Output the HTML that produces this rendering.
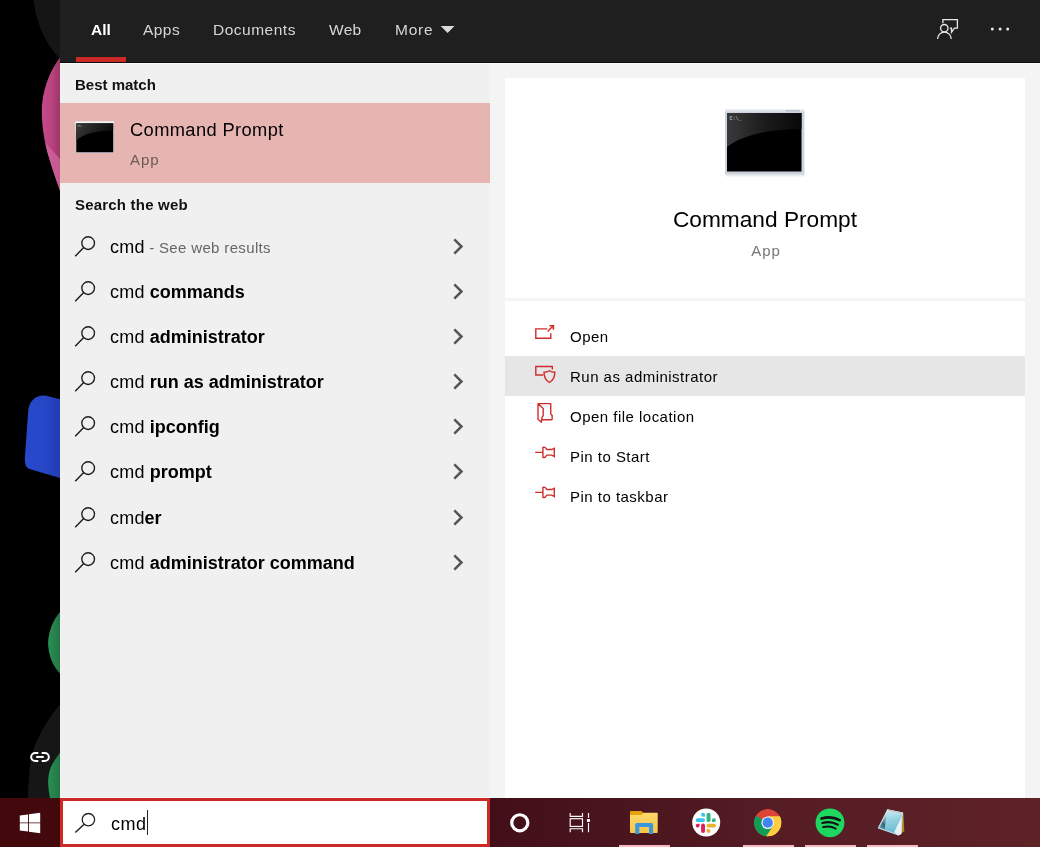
<!DOCTYPE html>
<html>
<head>
<meta charset="utf-8">
<title>Search</title>
<style>
*{box-sizing:border-box;margin:0;padding:0}
html,body{width:1040px;height:847px;overflow:hidden;background:#000;font-family:"Liberation Sans",sans-serif;}
#root{position:absolute;left:0;top:0;width:1040px;height:847px;overflow:hidden;background:#000}
.tab,.hdr,.txt,.t,#bm_t,#bm_s,#c_t,#c_s,#s_t{will-change:transform}
.abs{position:absolute}
/* wallpaper strip */
#wall{position:absolute;left:0;top:0;width:60px;height:798px;background:#000;overflow:hidden}
/* top bar */
#topbar{position:absolute;left:60px;top:0;width:980px;height:64px;background:#1f1f1f;border-bottom:1px solid #fafafa;z-index:2}
#topbar:after{content:"";position:absolute;left:0;top:62px;width:980px;height:1px;background:#0c0c0c}
.tab{position:absolute;top:1px;height:57px;line-height:58px;font-size:15.5px;color:#d6d6d6;white-space:nowrap}
.tab.sel{color:#fff;font-weight:bold}
#underline{position:absolute;left:16px;top:57px;width:50px;height:5px;background:#cb2a27}
/* left col */
#left{position:absolute;left:60px;top:63px;width:430px;height:735px;background:#f0f0f0}
.hdr{position:absolute;left:15px;font-size:15px;font-weight:bold;color:#111;white-space:nowrap}
#best{position:absolute;left:0;top:40px;width:430px;height:80px;background:#e6b4b1}
.row{position:absolute;left:0;width:430px;height:45px}
.row .txt{position:absolute;left:50px;top:1px;line-height:45px;font-size:18px;color:#000;white-space:nowrap;letter-spacing:0.200px}
.row .txt b{font-weight:bold;color:#000;letter-spacing:0}
.row .txt .sub{font-size:15px;color:#666;letter-spacing:0.350px}
.row svg.mag{position:absolute;left:0;top:0;overflow:visible}
.row svg.chev{position:absolute;left:390px;top:0}
/* right */
#right{position:absolute;left:490px;top:63px;width:550px;height:735px;background:#f4f4f4}
#card1{position:absolute;left:15px;top:15px;width:520px;height:220px;background:#fff}
#card2{position:absolute;left:15px;top:238px;width:520px;height:497px;background:#fff}
#sep{position:absolute;left:15px;top:235px;width:520px;height:3px;background:#f3f3f3}
#sep i{position:absolute;left:0;top:1px;width:517px;height:1px;background:#f8f8f8}
.act{position:absolute;left:0;width:520px;height:40px}
.act.hov{background:#e6e6e6}
.act .t{position:absolute;left:65px;top:1px;line-height:40px;font-size:15px;letter-spacing:0.480px;color:#000;white-space:nowrap}
.act .ic{position:absolute;left:23px;top:0}
.act .ic svg{display:block;overflow:visible}
/* taskbar */
#taskbar{position:absolute;left:0;top:798px;width:1040px;height:49px;background:linear-gradient(90deg,#43080b 0%,#43080b 6%,#420e17 47%,#47131c 56%,#561d25 76%,#5e2227 100%)}
#search{position:absolute;left:60px;top:0;width:430px;height:49px;background:#fff;border:3px solid #cb2a27}
</style>
</head>
<body>
<div id="root">

<div id="wall">
<svg width="60" height="798" viewBox="0 0 60 798">
  <defs>
    <linearGradient id="pk" x1="0" y1="0" x2="1" y2="0">
      <stop offset="0" stop-color="#c64a8c"/><stop offset="0.550" stop-color="#b9437f"/><stop offset="1" stop-color="#9c3769"/>
    </linearGradient>
    <linearGradient id="bl" x1="0" y1="0" x2="1" y2="0">
      <stop offset="0" stop-color="#2749cc"/><stop offset="0.600" stop-color="#2646c6"/><stop offset="1" stop-color="#213cb0"/>
    </linearGradient>
    <linearGradient id="gr" x1="0" y1="0" x2="1" y2="0">
      <stop offset="0" stop-color="#2a9054"/><stop offset="1" stop-color="#237645"/>
    </linearGradient>
    <clipPath id="pkc"><path d="M60 57.500 C52 68 44 84 42 105 C41 122 44 142 50 161 C53 171 57 182 60 191 Z"/></clipPath>
  </defs>
  <path d="M33.600 0 C35 14 39 26 44 36 C49 46 54 53 60 58.500 L60 0 Z" fill="#151515"/>
  <path d="M60 57.500 C52 68 44 84 42 105 C41 122 44 142 50 161 C53 171 57 182 60 191 Z" fill="url(#pk)"/>
  <path d="M38 135 L60 159 L60 195 L38 195 Z" fill="#d26aa0" opacity="0.700" clip-path="url(#pkc)"/>
  <path d="M60 399.200 L47 395.900 C36 394 29 401 28.200 411.200 L24.900 457 C24.500 464 26 467.700 29.500 469 L60 478 Z" fill="url(#bl)"/>
  <path d="M60 612 C53 620 48.500 631 48.100 642.500 C48 654 52 665 60 673.500 Z" fill="url(#gr)"/>
  <path d="M60 704.500 C53 713 48 720 44.700 725.800 C40 734 37 740 34.300 746.700 C31 756 29.500 766 29.100 775.300 C28.500 783 28 790 27.800 798 L60 798 Z" fill="#161616"/>
  <path d="M60 752.800 C56 758 53 762.500 50.700 767.500 C48.800 772.500 48 778 48.100 783.100 C48.300 788 49 793 50 798 L60 798 Z" fill="url(#gr)"/>
  <g fill="none" stroke="#fff" stroke-width="2">
    <path d="M38.300 752.900 H35.200 A4.050 4.050 0 0 0 35.200 761 H38.300"/>
    <path d="M41.700 752.900 H44.800 A4.050 4.050 0 0 1 44.800 761 H41.700"/>
    <path d="M36.200 756.950 H43.800"/>
  </g>
</svg>
</div>

<div id="topbar">
  <div class="tab sel" style="left:31px">All</div>
  <div class="tab" style="left:83px;letter-spacing:0.450px">Apps</div>
  <div class="tab" style="left:153px;letter-spacing:0.500px">Documents</div>
  <div class="tab" style="left:269px;letter-spacing:0.300px">Web</div>
  <div class="tab" style="left:335px;letter-spacing:0.750px">More</div>
  <svg class="abs" style="left:380px;top:25px" width="16" height="10" viewBox="0 0 16 10"><path d="M0.700 1 L14.500 1 L7.600 8 Z" fill="#dadada"/></svg>
  <div id="underline"></div>
  <svg class="abs" id="topicons" style="left:0;top:0" width="980" height="63" viewBox="60 0 980 63">
    <g fill="none" stroke="#e8e8e8" stroke-width="1.300">
      <circle cx="944.300" cy="28.200" r="3.700"/>
      <path d="M937.600 38.900 A6.800 6.800 0 0 1 951.200 38.900"/>
      <path d="M942.900 23.200 V19.700 H957.400 V28.200 H954.500 L951.500 32.200 V28.200 H949.800"/>
    </g>
    <g fill="#e8e8e8"><circle cx="992.300" cy="29.100" r="1.500"/><circle cx="1000.100" cy="29.100" r="1.500"/><circle cx="1007.700" cy="29.100" r="1.500"/></g>
  </svg>

</div>

<div id="left">
  <div class="abs" style="left:0;top:734px;width:430px;height:1px;background:#f9fcfc"></div>
  <div class="hdr" style="top:13px">Best match</div>
  <div id="best">
    <svg class="abs" style="left:15px;top:18px" width="39.500" height="32.500" viewBox="0 0 40 33" preserveAspectRatio="none">
      <defs><linearGradient id="g1" x1="0" y1="0" x2="1" y2="0.3"><stop offset="0" stop-color="#3c3c3c"/><stop offset="1" stop-color="#0a0a0a"/></linearGradient></defs>
      <rect x="0.500" y="0.500" width="39" height="32" fill="#c3c8d2"/>
      <rect x="0.500" y="0.500" width="39" height="11" fill="#e4e7ec"/>
      <rect x="0.500" y="0.500" width="39" height="2.300" fill="#f2f4f7"/>
      <rect x="1.300" y="2.400" width="37.400" height="29.300" fill="#000"/>
      <path d="M1.300 2.400 H38.700 V10 C22 10 8 13 1.300 20 Z" fill="url(#g1)"/>
      <rect x="2.400" y="4.300" width="3.400" height="1.200" fill="#bbb" opacity="0.550"/>
      <rect x="5.900" y="5.300" width="1.500" height="0.600" fill="#bbb" opacity="0.450"/>
    </svg>
    <div class="abs" id="bm_t" style="left:70px;top:16px;font-size:18.300px;letter-spacing:0.380px;color:#000;white-space:nowrap;line-height:22px">Command Prompt</div>
    <div class="abs" id="bm_s" style="left:70px;top:48px;font-size:15px;letter-spacing:0.900px;color:#6e5858;white-space:nowrap;line-height:18px">App</div>
  </div>
  <div class="hdr" style="top:133px;letter-spacing:0.200px">Search the web</div>
  <div class="row" style="top:160.70px"><svg class="mag" width="30" height="45" viewBox="0 0 30 45"><circle cx="28.150" cy="19.100" r="6.350" fill="none" stroke="#1c1c1c" stroke-width="1.350"/><path d="M23.700 23.600 L15.200 32.200" stroke="#1c1c1c" stroke-width="1.450" fill="none"/></svg><div class="txt" id="r0">cmd<span class="sub"> - See web results</span></div><svg class="chev" width="14" height="45" viewBox="0 0 14 45"><path d="M4.300 15.300 L11.500 22.500 L4.300 29.700" fill="none" stroke="#555" stroke-width="2.500"/></svg></div>
  <div class="row" style="top:205.85px"><svg class="mag" width="30" height="45" viewBox="0 0 30 45"><circle cx="28.150" cy="19.100" r="6.350" fill="none" stroke="#1c1c1c" stroke-width="1.350"/><path d="M23.700 23.600 L15.200 32.200" stroke="#1c1c1c" stroke-width="1.450" fill="none"/></svg><div class="txt" id="r1">cmd <b>commands</b></div><svg class="chev" width="14" height="45" viewBox="0 0 14 45"><path d="M4.300 15.300 L11.500 22.500 L4.300 29.700" fill="none" stroke="#555" stroke-width="2.500"/></svg></div>
  <div class="row" style="top:251.00px"><svg class="mag" width="30" height="45" viewBox="0 0 30 45"><circle cx="28.150" cy="19.100" r="6.350" fill="none" stroke="#1c1c1c" stroke-width="1.350"/><path d="M23.700 23.600 L15.200 32.200" stroke="#1c1c1c" stroke-width="1.450" fill="none"/></svg><div class="txt" id="r2">cmd <b>administrator</b></div><svg class="chev" width="14" height="45" viewBox="0 0 14 45"><path d="M4.300 15.300 L11.500 22.500 L4.300 29.700" fill="none" stroke="#555" stroke-width="2.500"/></svg></div>
  <div class="row" style="top:296.15px"><svg class="mag" width="30" height="45" viewBox="0 0 30 45"><circle cx="28.150" cy="19.100" r="6.350" fill="none" stroke="#1c1c1c" stroke-width="1.350"/><path d="M23.700 23.600 L15.200 32.200" stroke="#1c1c1c" stroke-width="1.450" fill="none"/></svg><div class="txt" id="r3">cmd <b>run as administrator</b></div><svg class="chev" width="14" height="45" viewBox="0 0 14 45"><path d="M4.300 15.300 L11.500 22.500 L4.300 29.700" fill="none" stroke="#555" stroke-width="2.500"/></svg></div>
  <div class="row" style="top:341.30px"><svg class="mag" width="30" height="45" viewBox="0 0 30 45"><circle cx="28.150" cy="19.100" r="6.350" fill="none" stroke="#1c1c1c" stroke-width="1.350"/><path d="M23.700 23.600 L15.200 32.200" stroke="#1c1c1c" stroke-width="1.450" fill="none"/></svg><div class="txt" id="r4">cmd <b>ipconfig</b></div><svg class="chev" width="14" height="45" viewBox="0 0 14 45"><path d="M4.300 15.300 L11.500 22.500 L4.300 29.700" fill="none" stroke="#555" stroke-width="2.500"/></svg></div>
  <div class="row" style="top:386.45px"><svg class="mag" width="30" height="45" viewBox="0 0 30 45"><circle cx="28.150" cy="19.100" r="6.350" fill="none" stroke="#1c1c1c" stroke-width="1.350"/><path d="M23.700 23.600 L15.200 32.200" stroke="#1c1c1c" stroke-width="1.450" fill="none"/></svg><div class="txt" id="r5">cmd <b>prompt</b></div><svg class="chev" width="14" height="45" viewBox="0 0 14 45"><path d="M4.300 15.300 L11.500 22.500 L4.300 29.700" fill="none" stroke="#555" stroke-width="2.500"/></svg></div>
  <div class="row" style="top:431.60px"><svg class="mag" width="30" height="45" viewBox="0 0 30 45"><circle cx="28.150" cy="19.100" r="6.350" fill="none" stroke="#1c1c1c" stroke-width="1.350"/><path d="M23.700 23.600 L15.200 32.200" stroke="#1c1c1c" stroke-width="1.450" fill="none"/></svg><div class="txt" id="r6">cmd<b>er</b></div><svg class="chev" width="14" height="45" viewBox="0 0 14 45"><path d="M4.300 15.300 L11.500 22.500 L4.300 29.700" fill="none" stroke="#555" stroke-width="2.500"/></svg></div>
  <div class="row" style="top:476.75px"><svg class="mag" width="30" height="45" viewBox="0 0 30 45"><circle cx="28.150" cy="19.100" r="6.350" fill="none" stroke="#1c1c1c" stroke-width="1.350"/><path d="M23.700 23.600 L15.200 32.200" stroke="#1c1c1c" stroke-width="1.450" fill="none"/></svg><div class="txt" id="r7">cmd <b>administrator command</b></div><svg class="chev" width="14" height="45" viewBox="0 0 14 45"><path d="M4.300 15.300 L11.500 22.500 L4.300 29.700" fill="none" stroke="#555" stroke-width="2.500"/></svg></div>
</div>

<div id="right">
  <div id="card1">
    <svg class="abs" style="left:219px;top:30px" width="82" height="70" viewBox="0 0 82 70">
      <defs>
        <linearGradient id="g2" x1="0" y1="0" x2="1" y2="0"><stop offset="0" stop-color="#3a3a3a"/><stop offset="0.5" stop-color="#1c1c1c"/><stop offset="1" stop-color="#080808"/></linearGradient>
        <linearGradient id="g3" x1="0" y1="0" x2="0" y2="1"><stop offset="0" stop-color="#f2f4f7"/><stop offset="1" stop-color="#c9d0da"/></linearGradient>
      </defs>
      <rect x="2" y="2.5" width="79" height="66" fill="#e3e5e8" opacity="0.7"/>
      <rect x="1" y="1" width="79" height="65.500" fill="#cdd3dc"/>
      <rect x="1" y="1" width="79" height="4" fill="url(#g3)"/>
      <rect x="3" y="5" width="74.500" height="58.500" fill="#000"/>
      <path d="M3 5 H77.500 V21 C45 21 18 27 3 39 Z" fill="url(#g2)"/>
      <text x="5.500" y="12" font-family="Liberation Mono, monospace" font-size="5" font-weight="bold" fill="#bbb">C:\_</text>
      <rect x="62" y="2" width="14" height="1.500" fill="#b4bcc8" opacity="0.8"/>
    </svg>
    <div class="abs" id="c_t" style="left:0;top:126px;width:520px;text-align:center;font-size:22.700px;color:#000;line-height:30px;white-space:nowrap">Command Prompt</div>
    <div class="abs" id="c_s" style="left:1px;top:163px;width:520px;text-align:center;font-size:15px;letter-spacing:0.900px;color:#767676;line-height:20px">App</div>
  </div>
  <div id="sep"><i></i></div>
  <div id="card2">

    <div class="act" style="top:15px"><div class="t" id="a0">Open</div></div>
    <div class="act hov" style="top:55px"><div class="t" id="a1">Run as administrator</div></div>
    <div class="act" style="top:95px"><div class="t" id="a2">Open file location</div></div>
    <div class="act" style="top:135px"><div class="t" id="a3">Pin to Start</div></div>
    <div class="act" style="top:175px"><div class="t" id="a4">Pin to taskbar</div></div>
    <svg class="abs" id="acticons" style="left:0;top:0" width="520" height="497" viewBox="505 301 520 497" fill="none" stroke="#cf2d2b" stroke-width="1.400">
      <!-- open -->
      <path d="M547.300 328.900 H535.800 V338.300 H550.800 V333.300"/>
      <path d="M547.600 331.600 L553.300 325.800"/>
      <path d="M549.400 325.700 H553.400 V329.700" stroke-width="1.600"/>
      <!-- run as admin -->
      <path d="M543.200 375 H535.800 V366.500 H552.300 V369.600"/>
      <path d="M549.400 370.700 C550.900 371.800 552.800 372.300 554.800 372.300 C554.800 377 553.400 380.300 549.400 382.500 C545.400 380.300 544 377 544 372.300 C546 372.300 547.900 371.800 549.400 370.700 Z"/>
      <!-- open file location -->
      <path stroke-linejoin="round" d="M538 403.600 H550.750 V414.100 L552.150 415.550 V419 Q552.150 419.750 551.400 419.750 H541.900 M538 403.600 V419.300 L541.350 422.300 L541.900 417.700 L543.200 415.700 V408.450 L538.300 404"/>
      <!-- pin to start -->
      <path d="M535.200 452.350 H542.500 M542.900 446.700 V457.700 M542.900 447.150 C544.200 447.150 545.100 447.200 545.400 447.600 L546.800 449.550 H551.800 L554.300 448.300 V456.500 L551.800 455.150 H546.800 L545.200 457.100 C544.700 457.500 544 457.450 542.900 457.450"/>
      <path transform="translate(0 40)" d="M535.200 452.350 H542.500 M542.900 446.700 V457.700 M542.900 447.150 C544.200 447.150 545.100 447.200 545.400 447.600 L546.800 449.550 H551.800 L554.300 448.300 V456.500 L551.800 455.150 H546.800 L545.200 457.100 C544.700 457.500 544 457.450 542.900 457.450"/>
    </svg>
  </div>
</div>

<div id="taskbar">
  <div id="search"><svg class="abs" style="left:-3px;top:-3px" width="60" height="49" viewBox="60 798 60 49"><circle cx="88.400" cy="819.700" r="6.200" fill="none" stroke="#222" stroke-width="1.300"/><path d="M84.100 824.200 L75.300 832.600" stroke="#222" stroke-width="1.400" fill="none"/></svg>
    <div class="abs" id="s_t" style="left:47.500px;top:2px;height:43px;line-height:43px;font-size:18px;letter-spacing:0.550px;color:#000;white-space:nowrap">cmd</div>
    <div class="abs" id="caret" style="left:83.500px;top:9px;width:1px;height:25px;background:#222"></div></div>
  <svg class="abs" id="tbicons" style="left:0;top:0" width="1040" height="49" viewBox="0 798 1040 49">
    <defs>
      <linearGradient id="np1" x1="0.300" y1="0" x2="0.500" y2="1"><stop offset="0" stop-color="#cbeaf2"/><stop offset="0.450" stop-color="#8fd0e0"/><stop offset="1" stop-color="#66b8d0"/></linearGradient>
      <linearGradient id="np2" x1="0.700" y1="0" x2="0.200" y2="1"><stop offset="0" stop-color="#7f98a3" stop-opacity="0.300"/><stop offset="0.600" stop-color="#3e5f6e"/><stop offset="1" stop-color="#4f9fba"/></linearGradient>
      <linearGradient id="fo1" x1="0" y1="0" x2="0" y2="1"><stop offset="0" stop-color="#ffd86a"/><stop offset="1" stop-color="#f7c64a"/></linearGradient>
      <clipPath id="chc"><circle cx="767.700" cy="822.700" r="13.800"/></clipPath>
    </defs>
    <!-- windows logo -->
    <path d="M19.800 815.600 L28 814.450 V822.450 H19.800 Z M28.900 814.300 L40.200 812.700 V822.450 H28.900 Z M19.800 823.350 H28 V831.600 L19.800 830.450 Z M28.900 823.350 H40.200 V833.300 L28.900 831.750 Z" fill="#fff"/>
    <!-- cortana -->
    <circle cx="519.800" cy="822.800" r="8.050" fill="none" stroke="#fff" stroke-width="3.200"/>
    <!-- task view -->
    <g fill="none" stroke="#fff" stroke-width="1.150">
      <path d="M570.200 812.900 V816.400 H582.500 V812.900"/>
      <rect x="570.200" y="818.700" width="12.300" height="7.700"/>
      <path d="M570.200 832.200 V828.700 H582.500 V832.200"/>
      <path d="M588.500 812.900 V817.700 M588.500 823.100 V832.200"/>
    </g>
    <rect x="586.900" y="819.100" width="3.100" height="2.800" fill="#fff"/>
    <!-- explorer -->
    <rect x="630" y="812.700" width="27.700" height="20.300" rx="0.900" fill="url(#fo1)"/>
    <path d="M630 812 Q630 811 631 811 H641.200 L643.400 812.900 L641.400 814.900 H630 Z" fill="#e5a20f"/>
    <path d="M635.200 834 V824.500 Q635.200 823 636.700 823 H651.600 Q653.100 823 653.100 824.500 V834 H649 V827 H639.300 V834 Z" fill="#3a96dd"/>
    <!-- slack -->
    <circle cx="706.200" cy="822.500" r="14" fill="#fff"/>
    <g>
      <rect x="695.70" y="818.15" width="9.35" height="3.90" rx="1.95" fill="#36c5f0"/>
      <path d="M705.00 816.65 H703.05 A1.95 1.95 0 1 1 705.00 814.70 Z" fill="#36c5f0"/>
      <rect x="706.60" y="812.75" width="3.90" height="9.35" rx="1.95" fill="#2eb67d"/>
      <path d="M712.00 822.05 V820.10 A1.95 1.95 0 1 1 713.95 822.05 Z" fill="#2eb67d"/>
      <rect x="706.55" y="823.65" width="9.35" height="3.90" rx="1.95" fill="#ecb22e"/>
      <path d="M706.60 829.05 H708.55 A1.95 1.95 0 1 1 706.60 831.00 Z" fill="#ecb22e"/>
      <rect x="701.10" y="823.60" width="3.90" height="9.35" rx="1.95" fill="#e01e5a"/>
      <path d="M699.60 823.65 V825.60 A1.95 1.95 0 1 1 697.65 823.65 Z" fill="#e01e5a"/>
      </g>
    <!-- chrome -->
    <g clip-path="url(#chc)">
      <circle cx="767.700" cy="822.700" r="13.800" fill="#db4437"/>
      <path d="M767.700 822.700 L755.750 815.800 A13.800 13.800 0 0 0 767.700 836.500 L773.600 826.100 Z" fill="#0f9d58"/>
      <path d="M755.750 815.800 L761.800 826.100 L767.700 822.700 Z" fill="#0f9d58"/>
      <path d="M767.700 816.400 H779.950 A13.800 13.800 0 0 1 765.900 836.400 L773.200 825.900 Z" fill="#ffcd40"/>
      <path d="M767.700 816.400 H780.500 L781.500 822 L773.200 825.900 Z" fill="#ffcd40"/>
    </g>
    <circle cx="767.700" cy="822.700" r="6.300" fill="#f1f1f1"/>
    <circle cx="767.700" cy="822.700" r="5.100" fill="#4285f4"/>
    <!-- spotify -->
    <circle cx="830" cy="822.800" r="14.400" fill="#1ed760"/>
    <g fill="none" stroke="#111" stroke-linecap="round">
      <path d="M821.500 818.500 C827.500 816.600 834.500 817.200 839.700 820.200" stroke-width="2.700"/>
      <path d="M822.300 823 C827.500 821.500 833.300 822.100 837.800 824.700" stroke-width="2.200"/>
      <path d="M823 827.200 C827.300 826 832 826.400 835.800 828.700" stroke-width="1.800"/>
    </g>
    <!-- notepad -->
    <path d="M902.600 812.600 L903.400 813.100 L904.300 831.200 L902.600 832.300 L901 834 Z" fill="#b08a28"/>
    <path d="M887.300 809.300 L902.900 812.500 L901.400 833.800 L898.400 835.500 L877.700 828.300 Z" fill="#d3e6ed"/>
    <path d="M887.500 811 L902.200 814.200 L900.900 832.800 L898.300 834.600 L878.800 827.800 Z" fill="url(#np1)"/>
    <path d="M886.500 814 L879.600 827.500 L884.700 829.300 Z" fill="url(#np2)"/>
    <path d="M901.800 816.300 L901.400 833.800 L898.400 835.500 L894.100 832.200 Z" fill="#e9f0f3"/>
    <path d="M887.300 809.300 L902.900 812.500 L902.700 814.300 L886.700 810.900 Z" fill="#d9dfe3"/>
    <path d="M888.500 810.300 L901.500 813" stroke="#9aa4aa" stroke-width="0.800" stroke-dasharray="1.200 0.800" fill="none"/>
    <!-- underlines -->
    <g fill="#f7b9bf">
      <rect x="619" y="845" width="51" height="2"/>
      <rect x="743" y="845" width="51" height="2"/>
      <rect x="805" y="845" width="51" height="2"/>
      <rect x="867" y="845" width="51" height="2"/>
    </g>
  </svg>

</div>

</div>
</body>
</html>
